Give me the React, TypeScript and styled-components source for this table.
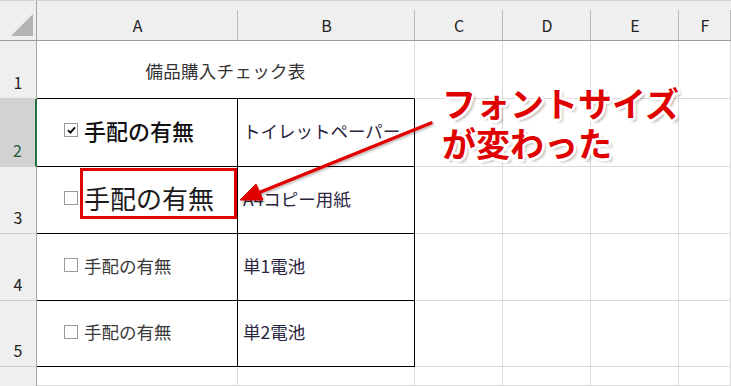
import React from 'react';
import styled, { createGlobalStyle } from 'styled-components';

const GlobalStyle = createGlobalStyle`
  html, body {
    margin: 0;
    padding: 0;
    background: #ffffff;
    overflow: hidden;
  }
  body {
    font-family: 'Noto Sans CJK JP', 'Noto Sans', sans-serif;
  }
`;

const RED = '#e00000';
const GRID = '#d9d9d9';

const columns = ['A', 'B', 'C', 'D', 'E', 'F'];

interface IItemRow {
  num: number;
  height: number;
  checked: boolean;
  labelSize: number;
  labelColor: string;
  labelWeight: number;
  item: string;
}

const items: IItemRow[] = [
  { num: 2, height: 68, checked: true, labelSize: 22, labelColor: '#111', labelWeight: 500, item: 'トイレットペーパー' },
  { num: 3, height: 67, checked: false, labelSize: 26, labelColor: '#1a1a1a', labelWeight: 400, item: 'A4コピー用紙' },
  { num: 4, height: 67, checked: false, labelSize: 17.5, labelColor: '#3a3a3a', labelWeight: 400, item: '単1電池' },
  { num: 5, height: 66, checked: false, labelSize: 17.5, labelColor: '#3a3a3a', labelWeight: 400, item: '単2電池' },
];

const Sheet: React.FC = () => {
  const rowTemplate = ['40px', '58px', ...items.map((r) => `${r.height}px`), '1fr'].join(' ');

  return (
    <Page>
      <Grid style={{ gridTemplateRows: rowTemplate }}>
        {/* header row */}
        <Corner>
          <CornerTriangle />
        </Corner>
        {columns.map((c) => (
          <ColHeader key={c}>{c}</ColHeader>
        ))}

        {/* row 1 */}
        <RowHeader>1</RowHeader>
        <TitleCell>備品購入チェック表</TitleCell>
        {columns.slice(2).map((c) => (
          <Cell key={`1${c}`} />
        ))}

        {/* rows 2-5 */}
        {items.map((r) => (
          <React.Fragment key={r.num}>
            <RowHeader $active={r.num === 2}>{r.num}</RowHeader>
            <BoxedCell>
              <CheckRow>
                <CheckBox>
                  {r.checked && (
                    <svg width="9" height="8" viewBox="0 0 9 8">
                      <path d="M1 4.2 L3.4 6.6 L8 1.4" fill="none" stroke="#000" strokeWidth="1.8" />
                    </svg>
                  )}
                </CheckBox>
                <Label $size={r.labelSize} $color={r.labelColor} $weight={r.labelWeight}>
                  手配の有無
                </Label>
              </CheckRow>
            </BoxedCell>
            <BoxedCell>
              <ItemText>{r.item}</ItemText>
            </BoxedCell>
            {columns.slice(2).map((c) => (
              <Cell key={`${r.num}${c}`} />
            ))}
          </React.Fragment>
        ))}

        {/* row 6 */}
        <RowHeader $bare />
        {columns.map((c) => (
          <Cell key={`6${c}`} />
        ))}
      </Grid>

      <Highlight />
      <Arrow width="731" height="386" viewBox="0 0 731 386">
        <defs>
          <filter id="sh" x="-10%" y="-10%" width="120%" height="120%">
            <feDropShadow dx="1" dy="1.5" stdDeviation="1" floodColor="#000" floodOpacity="0.3" />
          </filter>
        </defs>
        <g filter="url(#sh)" fill={RED} stroke={RED}>
          <line x1="431" y1="123" x2="258" y2="193" strokeWidth="3.5" strokeLinecap="round" />
          <polygon points="240,200 263,200 256,184" strokeWidth="1" strokeLinejoin="round" />
        </g>
      </Arrow>
      <Callout>
        フォントサイズ
        <br />
        が変わった
      </Callout>
    </Page>
  );
};

export default function App() {
  return (
    <>
      <GlobalStyle />
      <Sheet />
    </>
  );
}

const Page = styled.div`
  position: relative;
  width: 731px;
  height: 386px;
  overflow: hidden;
  background: #fff;
`;

const Grid = styled.div`
  display: grid;
  grid-template-columns: 37px 201px 177px 88px 88px 88px 1fr;
  width: 100%;
  height: 100%;
  border-top: 1px solid #d4d4d4;
  box-sizing: border-box;
`;

const Corner = styled.div`
  position: relative;
  background: #efefef;
  border-right: 1px solid #a6a6a6;
  border-bottom: 1px solid #9c9c9c;
  box-sizing: border-box;
`;

const CornerTriangle = styled.div`
  position: absolute;
  left: 11px;
  top: 13px;
  width: 22px;
  height: 22px;
  background: #b4b4b4;
  clip-path: polygon(100% 0, 100% 100%, 0 100%);
`;

const ColHeader = styled.div`
  display: flex;
  align-items: center;
  justify-content: center;
  padding-top: 9px;
  background: #efefef;
  border-bottom: 1px solid #9c9c9c;
  box-sizing: border-box;
  font-size: 16px;
  color: #222;
  background-image: linear-gradient(#b9b9b9, #b9b9b9);
  background-size: 1px calc(100% - 9px);
  background-position: right bottom;
  background-repeat: no-repeat;
`;

const RowHeader = styled.div<{ $active?: boolean; $bare?: boolean }>`
  display: flex;
  align-items: flex-end;
  justify-content: center;
  padding-bottom: 4px;
  box-sizing: border-box;
  background: ${(p) => (p.$active ? '#d2d2d2' : '#efefef')};
  border-right: ${(p) => (p.$active ? '2px solid #217346' : '1px solid #a6a6a6')};
  border-bottom: ${(p) => (p.$bare ? 'none' : '1px solid #cfcfcf')};
  font-size: 16px;
  color: ${(p) => (p.$active ? '#1e5a3a' : '#222')};
`;

const Cell = styled.div`
  border-right: 1px solid ${GRID};
  border-bottom: 1px solid ${GRID};
  box-sizing: border-box;
`;

const TitleCell = styled.div`
  grid-column: span 2;
  display: flex;
  align-items: center;
  justify-content: center;
  padding-top: 2px;
  border-right: 1px solid ${GRID};
  border-bottom: 1px solid #000;
  box-sizing: border-box;
  font-size: 17.5px;
  letter-spacing: 0.3px;
  color: #333;
`;

const BoxedCell = styled.div`
  display: flex;
  align-items: center;
  border-right: 1px solid #000;
  border-bottom: 1px solid #000;
  box-sizing: border-box;
  padding-bottom: 4px;
`;

const CheckRow = styled.div`
  display: flex;
  align-items: center;
  gap: 6px;
  padding-left: 27px;
`;

const CheckBox = styled.span`
  display: inline-flex;
  align-items: center;
  justify-content: center;
  width: 14px;
  height: 14px;
  box-sizing: border-box;
  border: 1px solid #9a9a9a;
  background: #fff;
  flex-shrink: 0;
`;

const Label = styled.span<{ $size: number; $color: string; $weight: number }>`
  font-size: ${(p) => p.$size}px;
  color: ${(p) => p.$color};
  font-weight: ${(p) => p.$weight};
  line-height: 1.2;
  white-space: nowrap;
`;

const ItemText = styled.span`
  padding-left: 5px;
  font-size: 17.5px;
  color: #2a2440;
  white-space: nowrap;
`;

const Highlight = styled.div`
  position: absolute;
  left: 80px;
  top: 168px;
  width: 157px;
  height: 51px;
  border: 3px solid ${RED};
  box-sizing: border-box;
`;

const Arrow = styled.svg`
  position: absolute;
  left: 0;
  top: 0;
  pointer-events: none;
`;

const Callout = styled.div`
  position: absolute;
  left: 442px;
  top: 83px;
  font-size: 34px;
  font-weight: 700;
  line-height: 40px;
  color: ${RED};
  white-space: nowrap;
  text-shadow:
    2.5px 0 0 #fff, -2.5px 0 0 #fff, 0 2.5px 0 #fff, 0 -2.5px 0 #fff,
    2px 2px 0 #fff, -2px -2px 0 #fff, 2px -2px 0 #fff, -2px 2px 0 #fff,
    3px 3px 3px rgba(0, 0, 0, 0.35);
`;
